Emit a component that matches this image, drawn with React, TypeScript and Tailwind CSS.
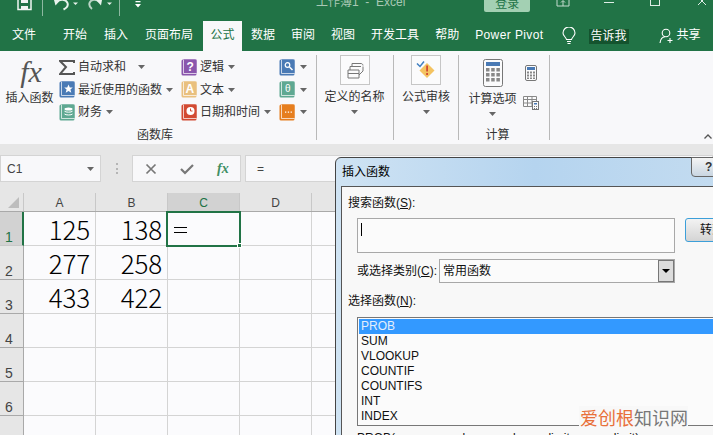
const F = { fontFamily: '"Liberation Sans","Noto Sans CJK SC",sans-serif' };

function Caret({ className = "" }: { className?: string }) {
  return (
    <svg width="7" height="4" viewBox="0 0 7 4" className={className}>
      <path d="M0 0h7L3.500 4z" fill="#666" />
    </svg>
  );
}

function Book({ color, children }: { color: string; children: React.ReactNode }) {
  return (
    <svg width="16" height="17" viewBox="0 0 16 17" className="shrink-0">
      <rect x="0.500" y="0.500" width="15" height="16" rx="1.500" fill={color} />
      <rect x="3" y="0.500" width="12.500" height="13.500" fill={color} />
      <path d="M2.500 1v13.500h13" stroke="#fff" strokeOpacity="0.7" fill="none" />
      {children}
    </svg>
  );
}

function FnRow({ icon, label, caretGap = "ml-1" }: { icon: React.ReactNode; label: string; caretGap?: string }) {
  return (
    <div className="flex h-[22.5px] items-center whitespace-nowrap text-[12px] text-[#333]">
      {icon}
      <span className="ml-[3px]">{label}</span>
      <Caret className={caretGap} />
    </div>
  );
}

function IconOnly({ icon }: { icon: React.ReactNode }) {
  return (
    <div className="flex h-[22.5px] items-center gap-[5px]">
      {icon}
      <Caret />
    </div>
  );
}

function Tab({ label, ml, active, wide }: { label: string; ml: string; active?: boolean; wide?: boolean }) {
  return active ? (
    <div className={`flex h-[30px] w-[39px] items-center justify-center bg-[#f8f8fa] pb-[3px] text-[12px] text-[#217346] ${ml}`}>{label}</div>
  ) : (
    <div className={`flex h-[30px] items-center whitespace-nowrap pb-[3px] text-[12px] text-white ${wide ? "tracking-[0.4px]" : ""} ${ml}`}>{label}</div>
  );
}

function TitleBar() {
  return (
    <div className="relative flex h-[21px] items-start overflow-hidden bg-[#217346] text-white">
      <svg width="15" height="11" viewBox="0 0 15 11" className="ml-[17px] shrink-0">
        <path d="M1 -1v10.500h13V-1" fill="none" stroke="#f0f6f2" strokeWidth="1.500" />
        <rect x="4" y="0" width="7" height="3" fill="#f0f6f2" />
        <rect x="4" y="6" width="7" height="4" fill="#f0f6f2" />
      </svg>
      <div className="ml-[10px] h-[16px] w-px bg-[#8db8a1]" />
      <svg width="26" height="11" viewBox="0 0 26 11" className="ml-[10px] shrink-0">
        <path d="M3 2C7-1 13-1 14.500 3c1 3-1 5-4 6.500" fill="none" stroke="#e8f2ec" strokeWidth="2" />
        <path d="M1 0h6.500L2.500 5.500z" fill="#e8f2ec" />
        <path d="M20 2.500h5l-2.500 2.500z" fill="#e8f2ec" />
      </svg>
      <svg width="26" height="11" viewBox="0 0 26 11" className="ml-[9px] shrink-0">
        <path d="M12 2C8-1 3-1 1.500 3c-.6 2.500 .5 4.500 2.500 6" fill="none" stroke="#b9d4c5" strokeWidth="2" />
        <path d="M14 0H8l5 5.500z" fill="#e8f2ec" />
        <path d="M19 2.500h5l-2.500 2.500z" fill="#e8f2ec" />
      </svg>
      <div className="ml-[5px] h-[16px] w-px bg-[#8db8a1]" />
      <svg width="6" height="7" viewBox="0 0 6 7" className="ml-[15px] mt-[1px] shrink-0">
        <path d="M.5 0h5v1.200h-5zM0 3h6L3 6.500z" fill="#fff" />
      </svg>
      <div className="ml-[175px] mt-[-5px] whitespace-nowrap text-[12px] leading-[14px] text-[#a9c8b5]">工作簿1&nbsp;&nbsp;-&nbsp;&nbsp;Excel</div>
      <div className="ml-[79px] mt-0 flex h-[12px] w-[46px] items-end justify-center rounded-b-[2px] bg-[#a3d0b3] text-[12px] leading-[14px] text-[#217346]">
        <span className="relative top-[-1px]">登录</span>
      </div>
      <svg width="14" height="7" viewBox="0 0 14 7" className="ml-[26px] shrink-0">
        <path d="M1 0v6h12V0M7 6V1M5 2.500l2-2 2 2" fill="none" stroke="#c5dccf" />
      </svg>
      <div className="ml-[34px] mt-[2px] h-px w-[10px] bg-[#dfeee6]" />
      <div className="ml-[36px] h-[6px] w-[10px] border-x border-b border-[#dfeee6]" />
      <svg width="10" height="6" viewBox="0 0 10 6" className="ml-[37px] shrink-0">
        <path d="M1-3l8 8M9-3L1 5" stroke="#dfeee6" fill="none" />
      </svg>
    </div>
  );
}

function TabBar() {
  return (
    <div className="flex h-[30px] items-center bg-[#217346]">
      <Tab label="文件" ml="ml-[12px]" />
      <Tab label="开始" ml="ml-[27px]" />
      <Tab label="插入" ml="ml-[17px]" />
      <Tab label="页面布局" ml="ml-[17px]" />
      <Tab label="公式" ml="ml-[10px]" active />
      <Tab label="数据" ml="ml-[9px]" />
      <Tab label="审阅" ml="ml-[16px]" />
      <Tab label="视图" ml="ml-[16px]" />
      <Tab label="开发工具" ml="ml-[16px]" />
      <Tab label="帮助" ml="ml-[16px]" />
      <Tab label="Power Pivot" ml="ml-[16px]" wide />
      <svg width="14" height="18" viewBox="0 0 14 18" className="ml-[18px] shrink-0">
        <path d="M4.500 12.500C4 10 1 9 1 6a6 6 0 0 1 12 0c0 3-3 4-3.500 6.500z" fill="none" stroke="#fff" strokeWidth="1.100" />
        <path d="M5 14.500h4M5.500 16.500h3" stroke="#fff" strokeWidth="1.200" />
      </svg>
      <div className="ml-[13px] h-[15px] w-[40px] bg-[#14532e] text-center text-[12px] leading-[15px] text-white">告诉我</div>
      <svg width="16" height="16" viewBox="0 0 16 16" className="ml-[30px] shrink-0">
        <circle cx="7" cy="5" r="3.800" fill="none" stroke="#fff" strokeWidth="1.100" />
        <path d="M1 15c.5-3.500 2.500-6 5-6.200M11 10v5M8.500 12.500h5" stroke="#fff" strokeWidth="1.100" fill="none" />
      </svg>
      <div className="ml-[2px] pb-[3px] text-[12px] text-white">共享</div>
    </div>
  );
}

function BoxIcon({ children }: { children: React.ReactNode }) {
  return <div className="flex h-[30px] w-[30px] items-center justify-center border border-[#c6c6c6] bg-[#fbfbfc]">{children}</div>;
}

function Sep() {
  return <div className="my-[4px] w-px shrink-0 bg-[#b9b9b9]" />;
}

function Ribbon() {
  return (
    <div className="relative flex h-[93px] bg-[#f8f8fa] text-[#333]">
      <div className="flex w-[316px] shrink-0 flex-col">
        <div className="flex h-[74px]">
          <div className="flex w-[59px] shrink-0 flex-col items-center pt-[4px]">
            <div className="h-[34px] pl-[3px] text-[30px] italic leading-[34px] text-[#555]" style={{ fontFamily: '"Liberation Serif",serif' }}>fx</div>
            <div className="mt-[1px] whitespace-nowrap text-[12px] leading-[16px]">插入函数</div>
          </div>
          <div className="flex w-[122px] shrink-0 flex-col pt-[5px]">
            <FnRow
              caretGap="ml-[12px]"
              label="自动求和"
              icon={
                <svg width="16" height="15" viewBox="0 0 16 15" className="shrink-0">
                  <path d="M15 3V1H1l6 6-6 7h14v-2" fill="none" stroke="#555" strokeWidth="2" />
                </svg>
              }
            />
            <FnRow
              label="最近使用的函数"
              icon={
                <Book color="#4a7ab5">
                  <path d="M9.500 3.500l1.300 3h3l-2.400 2 .9 3.200-2.800-1.800-2.800 1.800.9-3.200-2.400-2h3z" fill="#fff" />
                </Book>
              }
            />
            <FnRow
              label="财务"
              icon={
                <Book color="#5fa892">
                  <ellipse cx="9.500" cy="5" rx="4" ry="1.500" fill="#fff" />
                  <path d="M5.500 7.200c1 1.300 7 1.300 8 0M5.500 10c1 1.300 7 1.300 8 0" stroke="#fff" fill="none" />
                </Book>
              }
            />
          </div>
          <div className="flex w-[98px] shrink-0 flex-col pt-[5px]">
            <FnRow
              label="逻辑"
              icon={
                <Book color="#8a56ad">
                  <text x="5.500" y="12" fontSize="12" fontWeight="700" fill="#fff" style={F}>?</text>
                </Book>
              }
            />
            <FnRow
              label="文本"
              icon={
                <Book color="#e9c07f">
                  <text x="4.500" y="12" fontSize="12" fontWeight="700" fill="#fff" style={F}>A</text>
                </Book>
              }
            />
            <FnRow
              label="日期和时间"
              icon={
                <Book color="#d24a32">
                  <circle cx="9.500" cy="7" r="4" fill="#fff" />
                  <path d="M9.500 4.500V7h2" stroke="#d24a32" fill="none" />
                </Book>
              }
            />
          </div>
          <div className="flex flex-col pt-[5px]">
            <IconOnly
              icon={
                <Book color="#4a7ab5">
                  <circle cx="8.500" cy="6" r="2.300" fill="none" stroke="#fff" strokeWidth="1.200" />
                  <path d="M10.500 8l3 3" stroke="#fff" strokeWidth="1.500" />
                </Book>
              }
            />
            <IconOnly
              icon={
                <Book color="#5fa892">
                  <text x="6" y="11" fontSize="10" fill="#fff" style={F}>θ</text>
                </Book>
              }
            />
            <IconOnly
              icon={
                <Book color="#e67e1e">
                  <path d="M6 7.500h1.300v1.300H6zM8.800 7.500h1.300v1.300H8.800zM11.600 7.500h1.300v1.300h-1.300z" fill="#fff" />
                </Book>
              }
            />
          </div>
        </div>
        <div className="mt-[2px] w-[310px] text-center text-[12px] leading-[16px]">函数库</div>
      </div>
      <Sep />
      <div className="flex w-[76px] shrink-0 flex-col items-center pr-[1px] pt-[4px]">
        <BoxIcon>
          <svg width="20" height="20" viewBox="0 0 20 20">
            <path d="M3 10h11v8H3zM3 13.500h11M5 10V6.500h11M14 15l4-4V6.500M7 3.500h9c1 0 2 1 2 2M7 6V3.500" fill="none" stroke="#777" />
          </svg>
        </BoxIcon>
        <div className="mt-[4px] whitespace-nowrap text-[12px] leading-[16px]">定义的名称</div>
        <Caret className="mt-[5px]" />
      </div>
      <Sep />
      <div className="flex w-[64px] shrink-0 flex-col items-center pt-[4px]">
        <BoxIcon>
          <svg width="20" height="20" viewBox="0 0 20 20">
            <path d="M11 3l7.500 7.500L11 18l-7.500-7.500z" fill="#f4c361" />
            <path d="M10.200 5.500h1.800v6h-1.800zM10.200 13h1.800v2h-1.800z" fill="#d24a32" />
            <path d="M1 3.500l3 3 4-5" fill="none" stroke="#3f7fc0" strokeWidth="1.500" />
          </svg>
        </BoxIcon>
        <div className="mt-[4px] whitespace-nowrap text-[12px] leading-[16px]">公式审核</div>
        <Caret className="mt-[5px]" />
      </div>
      <Sep />
      <div className="flex w-[90px] shrink-0 flex-col">
        <div className="flex h-[74px]">
          <div className="flex w-[64px] shrink-0 flex-col items-center pl-[3px] pt-[8px]">
            <svg width="20" height="28" viewBox="0 0 20 28" className="shrink-0">
              <rect x="0.500" y="0.500" width="19" height="27" rx="2" fill="#fbfbfc" stroke="#777" />
              <rect x="3" y="3" width="14" height="4" fill="#4a7ab5" />
              <path d="M3 9h3.500v3.500H3zM8.200 9h3.500v3.500H8.200zM13.400 9h3.500v3.500h-3.500zM3 14h3.500v3.500H3zM8.200 14h3.500v3.500H8.200zM13.400 14h3.500v3.500h-3.500zM3 19h3.500v3.500H3zM8.200 19h3.500v3.500H8.200zM13.400 19h3.500v3.500h-3.500z" fill="#888" />
            </svg>
            <div className="mt-[4px] whitespace-nowrap text-[12px] leading-[16px]">计算选项</div>
            <Caret className="mt-[5px]" />
          </div>
          <div className="flex flex-col items-center gap-[15px] pt-[14px]">
            <svg width="12" height="16" viewBox="0 0 12 16" className="shrink-0">
              <rect x="0.500" y="0.500" width="11" height="15" rx="1.500" fill="#fbfbfc" stroke="#777" />
              <rect x="2" y="2" width="8" height="3" fill="#4a7ab5" />
              <path d="M2 6.500h2v2H2zM5 6.500h2v2H5zM8 6.500h2v2H8zM2 9.500h2v2H2zM5 9.500h2v2H5zM8 9.500h2v2H8zM2 12.500h2v1.500H2zM5 12.500h2v1.500H5zM8 12.500h2v1.500H8z" fill="#888" />
            </svg>
            <svg width="16" height="14" viewBox="0 0 16 14" className="shrink-0">
              <path d="M.5.500h13v10H.5zM.5 3.500h13M.5 7h9M4.500.5v10M9 .5v10" fill="#fbfbfc" stroke="#888" />
              <rect x="9.500" y="5.500" width="6" height="8" fill="#fbfbfc" stroke="#777" />
              <rect x="11" y="7" width="3" height="1.500" fill="#4a7ab5" />
              <path d="M11 10h1v1h-1zM13 10h1v1h-1zM11 12h1v1h-1zM13 12h1v1h-1z" fill="#777" />
            </svg>
          </div>
        </div>
        <div className="mt-[2px] w-[77px] text-center text-[12px] leading-[16px]">计算</div>
      </div>
      <Sep />
      <svg width="8" height="5" viewBox="0 0 8 5" className="absolute bottom-[5px] right-[1px]">
        <path d="M.5 4.500L4 1l3.500 3.500" fill="none" stroke="#555" strokeWidth="1.300" />
      </svg>
    </div>
  );
}

function FormulaBar() {
  return (
    <div className="flex h-[49px] bg-[#e6e6e6] pt-[11px]">
      <div className="flex h-[27px] w-[101px] shrink-0 items-center justify-between border border-[#d4d4d4] bg-[#f8f8fa] pl-[6px] pr-[6px] text-[12px] text-[#444]">
        C1
        <Caret />
      </div>
      <div className="ml-[15px] mt-[8px] flex h-[11px] w-[2px] flex-col justify-between">
        <div className="h-[2px] w-[2px] bg-[#b5b5b5]" />
        <div className="h-[2px] w-[2px] bg-[#b5b5b5]" />
        <div className="h-[2px] w-[2px] bg-[#b5b5b5]" />
      </div>
      <div className="ml-[14px] flex h-[27px] w-[109px] shrink-0 items-center border border-[#d4d4d4] bg-[#f8f8fa]">
        <svg width="12" height="12" viewBox="0 0 12 12" className="ml-[12px] shrink-0">
          <path d="M1.500 1.500l9 9M10.500 1.500l-9 9" stroke="#777" strokeWidth="1.700" />
        </svg>
        <svg width="14" height="12" viewBox="0 0 14 12" className="ml-[23px] shrink-0">
          <path d="M1 6l4 4 8-8" fill="none" stroke="#777" strokeWidth="2.200" />
        </svg>
        <div className="ml-[23px] text-[14px] font-bold italic leading-none text-[#3f8f64]" style={{ fontFamily: '"Liberation Serif",serif' }}>fx</div>
      </div>
      <div className="ml-[4px] flex h-[27px] flex-1 items-center border border-[#d4d4d4] bg-[#f8f8fa] pl-[11px] text-[12px] text-[#444]">=</div>
    </div>
  );
}

const cols = ["A", "B", "C", "D", "E", "F", "G", "H", "I", "J"];
const data = [
  ["125", "138"],
  ["277", "258"],
  ["433", "422"],
  ["", ""],
  ["", ""],
  ["", ""],
  ["", ""],
];
const NUM = { fontFamily: '"Noto Sans CJK SC","Liberation Sans",sans-serif' };

function Sheet() {
  return (
    <div className="relative min-h-0 flex-1 overflow-hidden bg-[#fbfbfd]">
      <div className="flex h-[19px] border-b border-[#a9a9a9] bg-[#e6e6e6]">
        <div className="flex w-[24px] shrink-0 items-end justify-end border-r border-[#c8c8c8] pb-[3px] pr-[4px]">
          <svg width="11" height="11" viewBox="0 0 11 11"><path d="M11 0v11H0z" fill="#bdbdbd" /></svg>
        </div>
        {cols.map((c) => (
          <div
            key={c}
            className={`flex w-[72px] shrink-0 items-end justify-center border-r border-[#c8c8c8] text-[12px] leading-[16px] ${c === "C" ? "bg-[#d2d2d2] text-[#217346]" : "text-[#444]"}`}
          >
            {c}
          </div>
        ))}
      </div>
      {data.map((r, i) => (
        <div key={i} className="flex h-[34px]">
          <div
            className={`flex w-[24px] shrink-0 items-end border-b border-r pl-[5px] text-[14px] leading-[16px] ${i === 0 ? "border-b-[#c8c8c8] border-r-[2px] border-r-[#217346] bg-[#d2d2d2] text-[#217346]" : "border-[#a9a9a9] bg-[#e6e6e6] text-[#444]"}`}
          >
            {i + 1}
          </div>
          {cols.map((c, j) => (
            <div key={c} className="flex w-[72px] shrink-0 items-center justify-end border-b border-r border-[#d4d4d4] pr-[5px] text-[26px] font-light tracking-[-0.2px] text-black" style={NUM}>
              {r[j] ?? ""}
            </div>
          ))}
        </div>
      ))}
      <div className="absolute left-[166px] top-[18px] h-[36px] w-[75px] border-2 border-[#217346]">
        <div className="absolute left-[6px] top-[14px] h-px w-[13px] bg-black" />
        <div className="absolute left-[6px] top-[19px] h-px w-[13px] bg-black" />
        <div className="absolute bottom-[-3px] right-[-3px] h-[5px] w-[5px] border border-white bg-[#217346]" />
      </div>
    </div>
  );
}

const funcs = ["PROB", "SUM", "VLOOKUP", "COUNTIF", "COUNTIFS", "INT", "INDEX"];

function Dialog() {
  return (
    <div className="absolute left-[335px] top-[157px] h-[290px] w-[400px] rounded-t-[6px] border border-[#444] bg-gradient-to-r from-[#cfe3f3] via-[#b5d4ef] to-[#c4dcf0] pl-[5px] pt-[28px]">
      <div className="absolute left-[6px] top-[6px] text-[12px] leading-[16px] text-black">插入函数</div>
      <div className="absolute left-[355px] top-[-1px] flex h-[20px] w-[40px] items-start rounded-b-[4px] border border-[#666] bg-gradient-to-b from-[#f4f4f4] to-[#c9d6e2] pl-[13px] text-[12px] font-bold leading-[18px] text-[#333]">?</div>
      <div className="h-full border border-[#555] bg-[#f8f8f8] pl-[6px] pt-[8px] text-[12px] text-[#111]">
        <div className="h-[16px] leading-[16px]">
          搜索函数(<span className="underline">S</span>):
        </div>
        <div className="mt-[7px] flex items-start pl-[9px]">
          <div className="h-[35px] w-[318px] shrink-0 border border-[#a8a8a8] bg-[#fbfbfb] pl-[3px] pt-[4px]">
            <div className="h-[13px] w-px bg-black" />
          </div>
          <div className="ml-[10px] flex h-[24px] w-[60px] shrink-0 items-center rounded-[3px] border border-[#3c9fd9] bg-gradient-to-b from-[#f3f3f3] to-[#d4d4d4] pl-[14px]">转到</div>
        </div>
        <div className="mt-[6px] flex items-center pl-[9px]">
          <div className="w-[82px] shrink-0 whitespace-nowrap">
            或选择类别(<span className="underline">C</span>):
          </div>
          <div className="flex h-[24px] w-[236px] shrink-0 items-center justify-between border border-[#a8a8a8] bg-[#fbfbfb] pl-[3px]">
            常用函数
            <div className="flex h-[22px] w-[16px] items-center justify-center border border-[#777] bg-[#dcdcdc]">
              <svg width="8" height="4" viewBox="0 0 8 4"><path d="M0 0h8L4 4z" fill="#000" /></svg>
            </div>
          </div>
        </div>
        <div className="mt-[10px] h-[16px] leading-[16px]">
          选择函数(<span className="underline">N</span>):
        </div>
        <div className="ml-[9px] mt-[8px] w-[380px] border border-[#777] bg-[#fbfbfb] p-px">
          {funcs.map((f, i) => (
            <div key={f} className={`h-[15px] pl-[2px] text-[12px] leading-[15px] ${i === 0 ? "bg-[#3399ff] text-[#e4eefc]" : "text-[#111]"}`}>{f}</div>
          ))}
        </div>
        <div className="ml-[9px] mt-[5px] whitespace-nowrap leading-[14px]">PROB(x_range, prob_range, lower_limit, upper_limit)</div>
      </div>
    </div>
  );
}

export default function App() {
  return (
    <div className="relative flex h-[435px] w-[713px] flex-col overflow-hidden" style={F}>
      <TitleBar />
      <TabBar />
      <Ribbon />
      <FormulaBar />
      <Sheet />
      <Dialog />
      <div className="absolute bottom-[7px] right-[25px] bg-[#f8f8f8] pl-[1px] text-[18px] leading-[22px]" style={{ fontFamily: '"Noto Sans CJK SC",sans-serif' }}>
        <span className="text-[#e8703a]">爱创根</span>
        <span className="text-[#777]">知识网</span>
      </div>
    </div>
  );
}
